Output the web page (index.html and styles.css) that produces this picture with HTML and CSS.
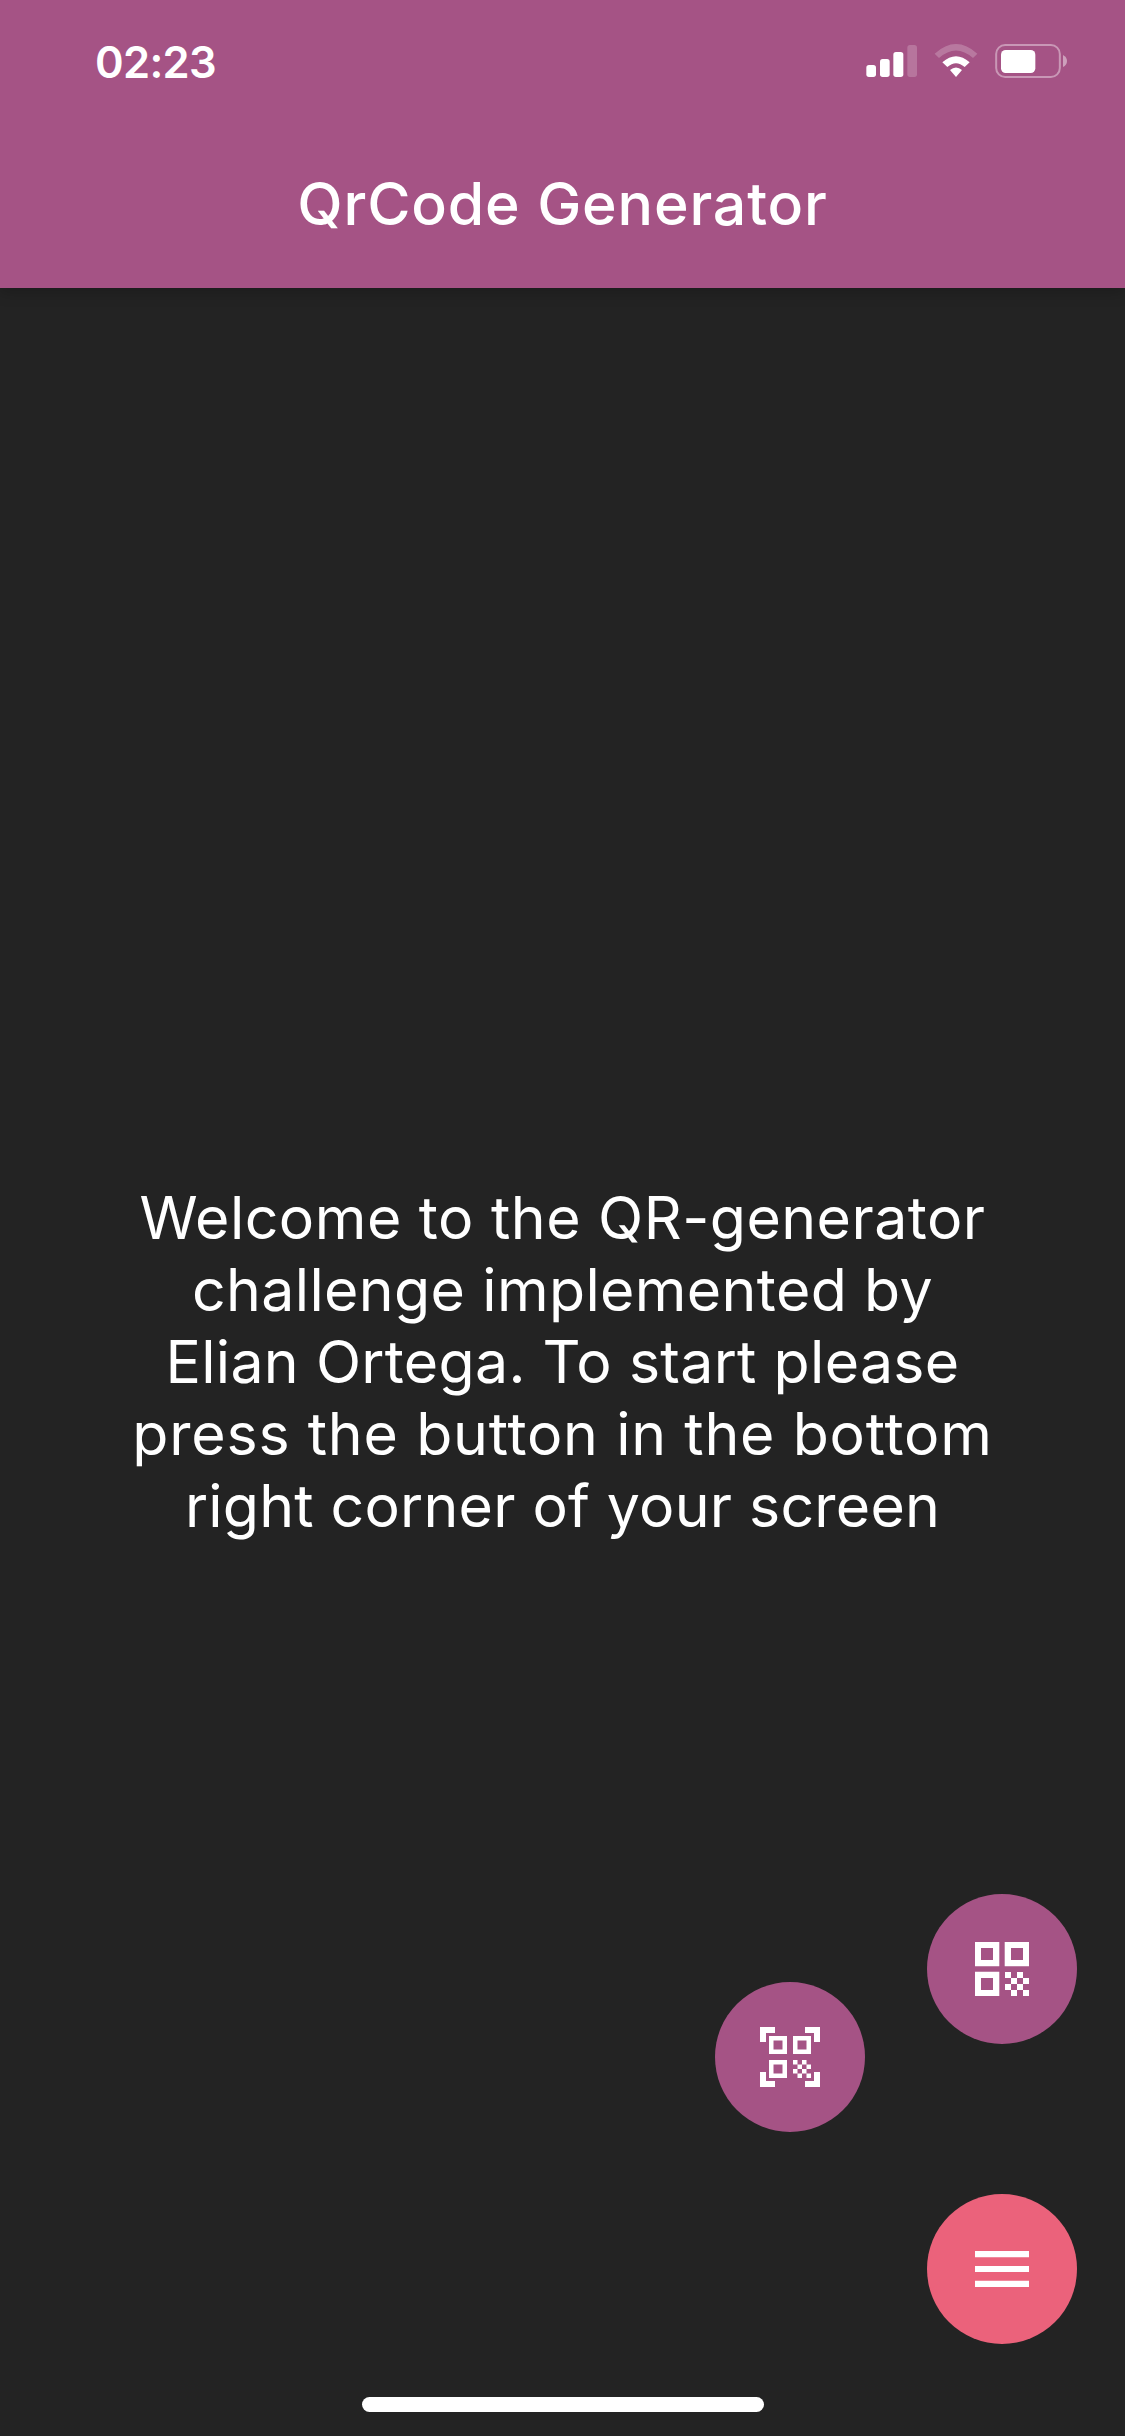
FILE: index.html
```html
<!DOCTYPE html>
<html lang="en">
<head>
<meta charset="utf-8">
<title>QrCode Generator</title>
<link rel="stylesheet" href="styles.css">
</head>
<body>
<div class="screen">
  <header class="app-bar">
    <div class="status">
      <span class="time">02:23</span>
      <svg class="status-icons" viewBox="0 0 660 195" fill="#fff">
        <rect x="34" y="105" width="29" height="36" rx="8"/>
        <rect x="75" y="87" width="29" height="54" rx="8"/>
        <rect x="115" y="66" width="30" height="75" rx="8"/>
        <rect x="157" y="45" width="29" height="96" rx="8" opacity=".2"/>
        <path d="M239 71Q303 13 367 71L354 84Q303 39 252 84Z" opacity=".22" stroke="none"/>
        <path d="M262 97Q303 60 344 97L329 111Q303 88 277 111Z"/>
        <path d="M285 120Q303 105 321 120L303 141Z"/>
        <rect x="423.500" y="45" width="191" height="96" rx="27" fill="none" stroke="#fff" stroke-width="6" opacity=".4"/>
        <rect x="438" y="60" width="103" height="69" rx="14"/>
        <path d="M624 75Q636 81 636 93T624 111Z" opacity=".45"/>
      </svg>
    </div>
    <h1 class="title">QrCode Generator</h1>
  </header>
  <main class="content">
    <p class="message">
      <span class="line line-1">Welcome to the QR-generator</span>
      <span class="line line-2">challenge implemented by</span>
      <span class="line line-3">Elian Ortega. To start please</span>
      <span class="line line-4">press the button in the bottom</span>
      <span class="line line-5">right corner of your screen</span>
    </p>
  </main>
  <nav class="fab-menu">
    <button class="fab fab-scan" aria-label="Scan">
      <svg class="icon" viewBox="0 0 24 24"><path fill-rule="evenodd" d="M5 5h6v6H5zM6.500 6.500v3h3v-3zM5 13h6v6H5zM6.500 14.500v3h3v-3zM13 5h6v6h-6zM14.500 6.500v3h3v-3zM22 7h-2V4h-3V2h5zM22 22v-5h-2v3h-3v2zM2 22h5v-2H4v-3H2zM2 2v5h2V4h3V2z"/><path d="M13 13h1.500v1.500H13zM14.500 14.500H16V16h-1.500zM16 13h1.500v1.500H16zM13 16h1.500v1.500H13zM14.500 17.500H16V19h-1.500zM16 16h1.500v1.500H16zM17.500 14.500H19V16h-1.500zM17.500 17.500H19V19h-1.500z"/></svg>
    </button>
    <div class="fab-column">
      <button class="fab" aria-label="Generate">
        <svg class="icon" viewBox="0 0 24 24"><path fill-rule="evenodd" d="M3 3h8.100v8.100H3zM5 5v4h4V5zM12.900 3H21v8.100h-8.100zM15 5v4h4V5zM3 12.900h8.100V21H3zM5 15v4h4v-4z"/><path d="M13 13h2v2h-2zM17 13h2v2h-2zM15 15h2v2h-2zM19 15h2v2h-2zM13 17h2v2h-2zM17 17h2v2h-2zM15 19h2v2h-2zM19 19h2v2h-2z"/></svg>
      </button>
      <button class="fab fab-main" aria-label="Menu">
        <svg class="icon" viewBox="0 0 24 24"><path d="M3 6h18v2.100H3zM3 11h18v2H3zM3 15.900h18V18H3z"/></svg>
      </button>
    </div>
  </nav>
  <div class="home-indicator"></div>
</div>
</body>
</html>
```
FILE: styles.css
```css
* { box-sizing: border-box; }
body {
  margin: 0;
  background: #232323;
  color: #fff;
  font-family: Inter, "Liberation Sans", sans-serif;
}
.screen {
  position: relative;
  width: 1125px;
  height: 2436px;
  overflow: hidden;
  display: flex;
  flex-direction: column;
}
.app-bar {
  height: 288px;
  background: #a55385;
  box-shadow: 0 4px 14px rgba(0, 0, 0, .22);
}
.status {
  height: 120px;
  padding: 30px 50px 0 95px;
  display: flex;
  justify-content: space-between;
}
.time {
  font-size: 43.500px;
  font-weight: 600;
  line-height: 64px;
  letter-spacing: -.7px;
}
.status-icons { width: 220px; height: 65px; }
.title {
  margin: 0;
  text-align: center;
  font-size: 59px;
  font-weight: 500;
  line-height: 168px;
  letter-spacing: .85px;
  white-space: nowrap;
}
.content {
  flex: 1;
  display: flex;
  align-items: center;
  justify-content: center;
}
.message {
  margin: 0;
  text-align: center;
  font-size: 59px;
  line-height: 72px;
}
.line { display: block; white-space: nowrap; }
.line-1 { letter-spacing: .48px; }
.line-2 { letter-spacing: .35px; }
.line-3 { letter-spacing: .3px; }
.line-4 { letter-spacing: .8px; }
.line-5 { letter-spacing: .22px; }
.fab-menu {
  position: absolute;
  right: 48px;
  bottom: 92px;
  display: flex;
  align-items: flex-start;
  gap: 62px;
}
.fab-column { display: flex; flex-direction: column; gap: 150px; }
.fab {
  width: 150px;
  height: 150px;
  padding: 0;
  border: 0;
  border-radius: 50%;
  background: #a55385;
  display: flex;
  align-items: center;
  justify-content: center;
}
.fab-scan { margin-top: 88px; }
.fab-main { background: #eb627b; }
.icon { width: 72px; height: 72px; fill: #fff; }
.fab-scan .icon { margin-right: 1px; }
.home-indicator {
  position: absolute;
  left: 362px;
  bottom: 24px;
  width: 402px;
  height: 15px;
  border-radius: 8px;
  background: #fff;
}
```
